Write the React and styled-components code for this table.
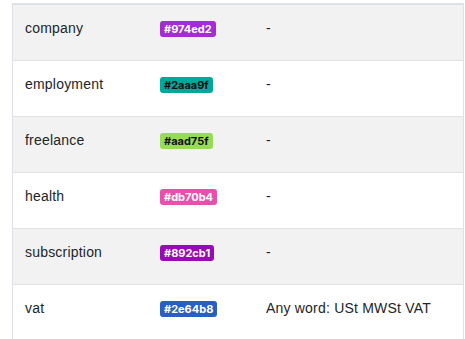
import React from 'react';
import styled, { createGlobalStyle } from 'styled-components';

const GlobalStyle = createGlobalStyle`
  body {
    margin: 0;
    background: #ffffff;
    font-family: "Liberation Sans", Arial, sans-serif;
    color: #212529;
  }
`;

const TableWrapper = styled.div`
  margin: 3px 1px 0 12px;
  border-top: 2px solid #dee2e6;
  border-left: 1px solid #dee2e6;
  border-right: 1px solid #dee2e6;
`;

const Row = styled.div`
  display: grid;
  grid-template-columns: 135px 106px 1fr;
  height: 55px;
  border-bottom: 1px solid #dee2e6;
  background: ${({ $striped }) => ($striped ? '#f2f2f2' : '#ffffff')};
`;

const Cell = styled.div`
  padding: 14px 12px 0;
  font-size: 14px;
  line-height: 18px;
  letter-spacing: 0.2px;
  white-space: nowrap;
`;

const Badge = styled.span`
  display: inline-block;
  padding: 0 4px;
  height: 16px;
  line-height: 16px;
  margin-top: 2px;
  border-radius: 3px;
  font-family: Inter, "Noto Sans", sans-serif;
  font-size: 11px;
  font-weight: 700;
  letter-spacing: 0;
  vertical-align: top;
  background: ${({ $bg }) => $bg};
  color: ${({ $light }) => ($light ? '#111' : '#fff')};
`;

const categories = [
  { name: 'company', color: '#974ed2', bg: '#a52bd5', desc: '-' },
  { name: 'employment', color: '#2aaa9f', bg: '#00a89b', desc: '-', light: true },
  { name: 'freelance', color: '#aad75f', bg: '#97dc55', desc: '-', light: true },
  { name: 'health', color: '#db70b4', bg: '#e94fad', desc: '-' },
  { name: 'subscription', color: '#892cb1', bg: '#9b08b5', desc: '-' },
  { name: 'vat', color: '#2e64b8', bg: '#285fc2', desc: 'Any word: USt MWSt VAT' },
];

const App = () => {
  return (
    <>
      <GlobalStyle />
      <TableWrapper>
        {categories.map((c, i) => (
          <Row key={c.name} $striped={i % 2 === 0}>
            <Cell>{c.name}</Cell>
            <Cell>
              <Badge $bg={c.bg} $light={c.light}>{c.color}</Badge>
            </Cell>
            <Cell>{c.desc}</Cell>
          </Row>
        ))}
      </TableWrapper>
    </>
  );
};

export default App;
